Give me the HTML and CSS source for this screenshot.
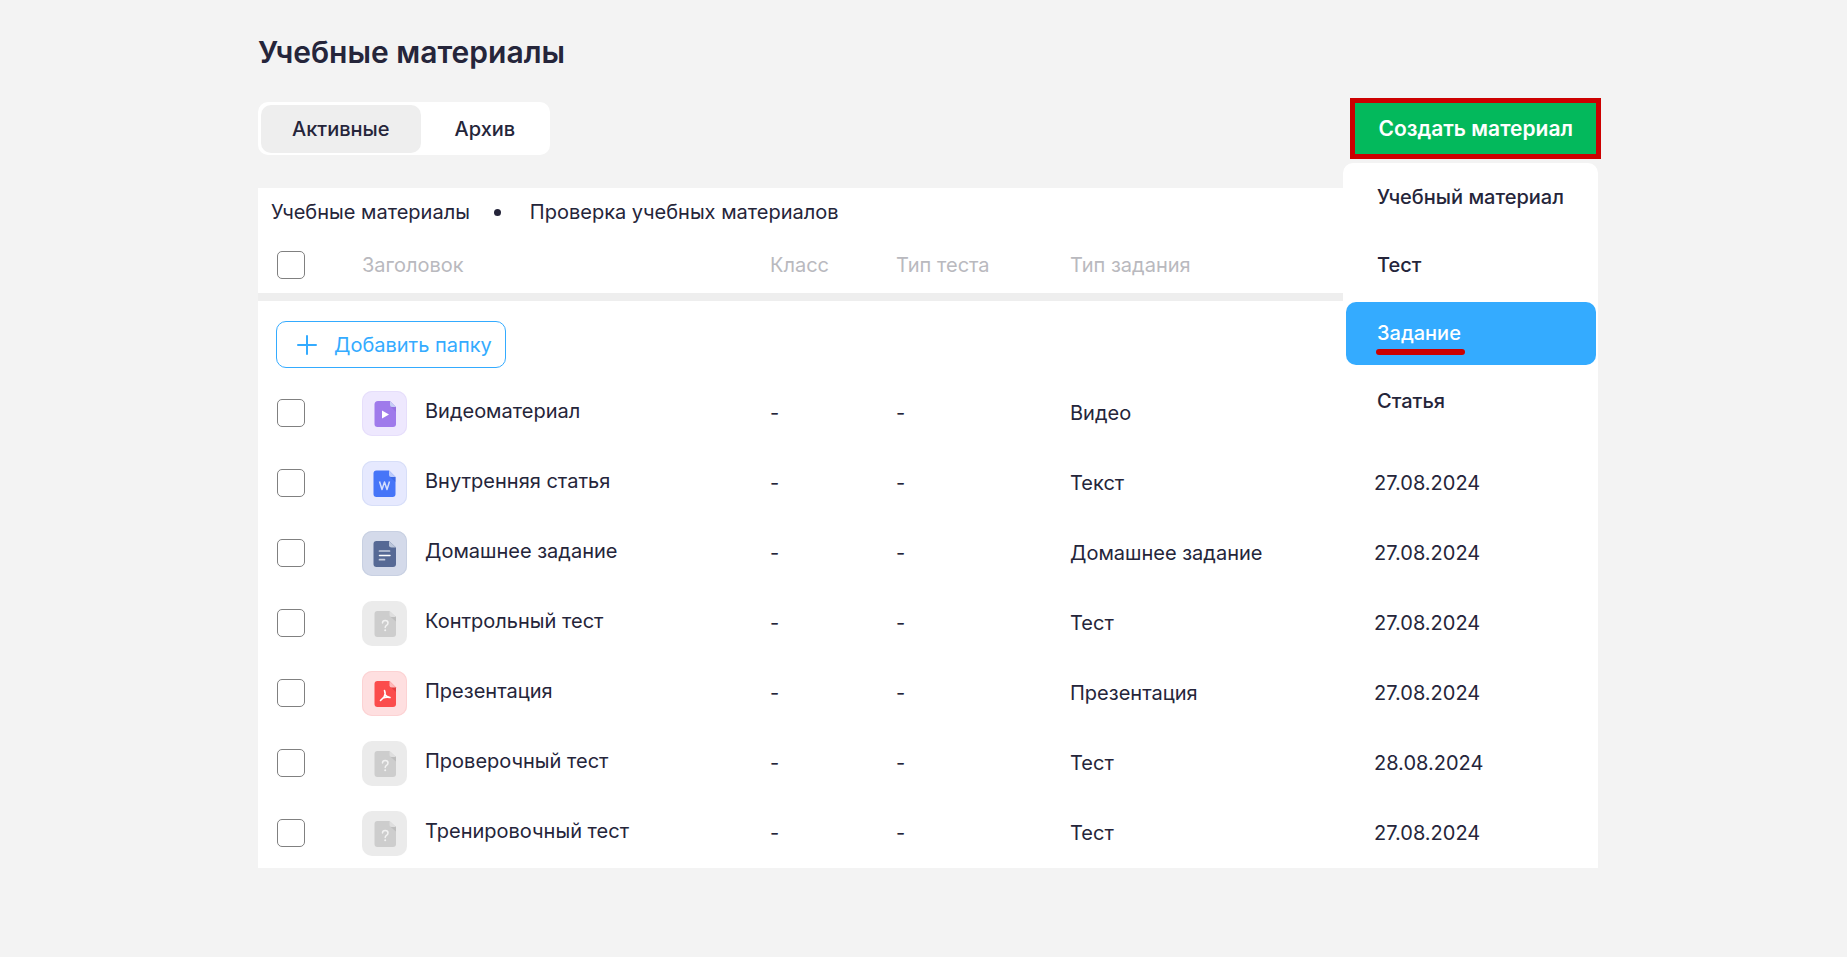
FILE: index.html
```html
<!DOCTYPE html>
<html lang="ru">
<head>
<meta charset="utf-8">
<meta name="viewport" content="width=device-width, initial-scale=1">
<title>Учебные материалы</title>
<link rel="stylesheet" href="styles.css">
</head>
<body>
<svg class="sprite" aria-hidden="true">
  <symbol id="i-video" viewBox="0 0 45 45">
    <path fill="#9f7aeb" d="M16 10H28L34 16V33Q34 36 31 36H15.500Q12.500 36 12.500 33V13.500Q12.500 10 16 10Z"/>
    <path fill="#8c69d8" opacity=".6" d="M29 16H34V21Z"/>
    <path fill="#c5cdf5" d="M28 10L34 16H30Q28 16 28 14Z"/>
    <path fill="#fff" d="M20 19.500L27 23.500L20 27.500Z"/>
  </symbol>
  <symbol id="i-word" viewBox="0 0 45 45">
    <path fill="#4675f8" d="M14.500 9.500H27L33.500 16V33Q33.500 36 30.500 36H14.500Q11.500 36 11.500 33V12.500Q11.500 9.500 14.500 9.500Z"/>
    <path fill="#355fd8" opacity=".6" d="M28 16H33.500V21Z"/>
    <path fill="#bccbfb" d="M27 9.500L33.500 16H29Q27 16 27 14Z"/>
    <path fill="none" stroke="#d3defd" stroke-width="1.500" stroke-linejoin="round" d="M17.500 20.500L20 28.500L22.500 21L25 28.500L27.500 20.500"/>
  </symbol>
  <symbol id="i-doc" viewBox="0 0 45 45">
    <path fill="#566995" d="M14.500 10H27L34 16.500V33Q34 36 31 36H14.500Q11.500 36 11.500 33V13Q11.500 10 14.500 10Z"/>
    <path fill="#bcc6da" d="M27 10L34 16.500H29.500Q27 16.500 27 14.500Z"/>
    <path fill="none" stroke="#c3cbdd" stroke-width="1.700" stroke-linecap="round" d="M17.500 20H27.500M17.500 28.700H22.500"/>
    <path fill="none" stroke="#fff" stroke-width="1.500" stroke-linecap="round" d="M17.500 24.400H28"/>
  </symbol>
  <symbol id="i-quiz" viewBox="0 0 45 45">
    <path fill="#cdcdcd" d="M15.500 10H27.500L34 16V33Q34 36 31 36H15.500Q12.500 36 12.500 33V13Q12.500 10 15.500 10Z"/>
    <path fill="#bdbdbd" d="M28 15.500H34V20.500Z"/>
    <path fill="#dedede" d="M27.500 10L34 16H29.500Q27.500 16 27.500 14Z"/>
    <path fill="none" stroke="#f2f2f2" stroke-width="1.500" stroke-linecap="round" d="M20.500 22Q20.500 19.500 23.200 19.500Q26 19.500 26 22Q26 23.500 24.500 24.300Q23.200 25 23.200 26.500"/>
    <circle cx="23.200" cy="29.300" r="1" fill="#f2f2f2"/>
  </symbol>
  <symbol id="i-pdf" viewBox="0 0 45 45">
    <path fill="#fb4c4c" d="M15.500 10H27.500L34 16.500V33Q34 36 31 36H15.500Q12.500 36 12.500 33V13Q12.500 10 15.500 10Z"/>
    <path fill="#e23d3f" d="M28.500 16H34V21Z"/>
    <path fill="#fdb9ba" d="M27.500 10L34 16.500H29.500Q27.500 16.500 27.500 14.500Z"/>
    <path fill="none" stroke="#fff" stroke-width="1.600" stroke-linecap="round" stroke-linejoin="round" d="M22.500 19.500Q24 23 22 26L18.500 29.500M22.800 23.500Q24.500 26 28 26.500M21 27Q24 25.800 28 26.500"/>
  </symbol>
</svg>

<main class="page">
  <h1 class="title">Учебные материалы</h1>

  <div class="toolbar">
    <div class="tabs">
      <button type="button" class="tab tab-active">Активные</button>
      <button type="button" class="tab">Архив</button>
    </div>
    <div class="create">
      <button type="button" class="create-btn">Создать материал</button>
      <div class="menu">
        <button type="button" class="menu-item">Учебный материал</button>
        <button type="button" class="menu-item">Тест</button>
        <button type="button" class="menu-item menu-item-active"><span class="marked">Задание</span></button>
        <button type="button" class="menu-item">Статья</button>
      </div>
    </div>
  </div>

  <section class="panel">
    <nav class="crumbs">
      <a class="crumb" href="#">Учебные материалы</a>
      <span class="dot"></span>
      <a class="crumb" href="#">Проверка учебных материалов</a>
    </nav>
    <table class="table">
      <colgroup>
        <col class="c-check"><col class="c-title"><col class="c-class"><col class="c-test"><col class="c-task"><col class="c-date">
      </colgroup>
      <thead>
        <tr>
          <th class="check-cell"><input class="check" type="checkbox" aria-labelledby="h-title"></th>
          <th id="h-title">Заголовок</th><th>Класс</th><th>Тип теста</th><th>Тип задания</th><th></th>
        </tr>
      </thead>
      <tbody>
        <tr>
          <td colspan="6" class="add-cell">
            <button type="button" class="add-btn"><svg class="plus" viewBox="0 0 20 20"><path d="M10 1V19M1 10H19"/></svg>Добавить папку</button>
          </td>
        </tr>
        <tr>
          <td class="check-cell"><input class="check" type="checkbox" aria-labelledby="m1"></td>
          <td><div class="material"><svg class="tile tile-video"><use href="#i-video"/></svg><span class="name" id="m1">Видеоматериал</span></div></td>
          <td>-</td><td>-</td><td>Видео</td><td></td>
        </tr>
        <tr>
          <td class="check-cell"><input class="check" type="checkbox" aria-labelledby="m2"></td>
          <td><div class="material"><svg class="tile tile-word"><use href="#i-word"/></svg><span class="name" id="m2">Внутренняя статья</span></div></td>
          <td>-</td><td>-</td><td>Текст</td><td>27.08.2024</td>
        </tr>
        <tr>
          <td class="check-cell"><input class="check" type="checkbox" aria-labelledby="m3"></td>
          <td><div class="material"><svg class="tile tile-doc"><use href="#i-doc"/></svg><span class="name" id="m3">Домашнее задание</span></div></td>
          <td>-</td><td>-</td><td>Домашнее задание</td><td>27.08.2024</td>
        </tr>
        <tr>
          <td class="check-cell"><input class="check" type="checkbox" aria-labelledby="m4"></td>
          <td><div class="material"><svg class="tile tile-quiz"><use href="#i-quiz"/></svg><span class="name" id="m4">Контрольный тест</span></div></td>
          <td>-</td><td>-</td><td>Тест</td><td>27.08.2024</td>
        </tr>
        <tr>
          <td class="check-cell"><input class="check" type="checkbox" aria-labelledby="m5"></td>
          <td><div class="material"><svg class="tile tile-pdf"><use href="#i-pdf"/></svg><span class="name" id="m5">Презентация</span></div></td>
          <td>-</td><td>-</td><td>Презентация</td><td>27.08.2024</td>
        </tr>
        <tr>
          <td class="check-cell"><input class="check" type="checkbox" aria-labelledby="m6"></td>
          <td><div class="material"><svg class="tile tile-quiz"><use href="#i-quiz"/></svg><span class="name" id="m6">Проверочный тест</span></div></td>
          <td>-</td><td>-</td><td>Тест</td><td>28.08.2024</td>
        </tr>
        <tr>
          <td class="check-cell"><input class="check" type="checkbox" aria-labelledby="m7"></td>
          <td><div class="material"><svg class="tile tile-quiz"><use href="#i-quiz"/></svg><span class="name" id="m7">Тренировочный тест</span></div></td>
          <td>-</td><td>-</td><td>Тест</td><td>27.08.2024</td>
        </tr>
      </tbody>
    </table>
  </section>
</main>
</body>
</html>
```

FILE: styles.css
```css
* {
  box-sizing: border-box;
}

body {
  margin: 0;
  background: #f3f3f3;
  color: #25253a;
  font-family: Inter, "Liberation Sans", sans-serif;
  font-size: 20px;
  line-height: 24px;
}

button {
  border: 0;
  margin: 0;
  background: none;
  color: inherit;
  font: inherit;
  font-weight: 500;
  cursor: pointer;
}

.sprite {
  display: none;
}

.page {
  padding: 32px 249px 64px 258px;
}

.title {
  margin: 0 0 30px;
  font-size: 30px;
  line-height: 40px;
  font-weight: 600;
}

.toolbar {
  display: flex;
  justify-content: space-between;
  align-items: center;
  margin-bottom: 33px;
}

.tabs {
  display: flex;
  gap: 1px;
  padding: 3px 2px 2px 3px;
  border-radius: 10px;
  background: #fff;
}

.tab {
  padding: 12px 33px;
  border-radius: 10px;
}

.tab-active {
  padding: 12px 31px;
  background: #eee;
}

.create {
  position: relative;
  padding-right: 2px;
}

.create-btn {
  display: block;
  padding: 14px 23px 13px;
  background: #03b95c;
  color: #fff;
  font-size: 21px;
  font-weight: 600;
  outline: 5px solid #c00;
}

.menu {
  position: absolute;
  z-index: 1;
  top: 60px;
  right: 0;
  display: flex;
  flex-direction: column;
  gap: 5px;
  width: 255px;
  padding: 3px 2px 3px 3px;
  border-radius: 10px;
  background: #fff;
}

.menu-item {
  height: 63px;
  padding: 0 31px 2px;
  border-radius: 10px;
  text-align: left;
  white-space: nowrap;
}

.menu-item-active {
  background: #34abff;
  color: #fff;
}

.marked {
  position: relative;
}

.marked::after {
  content: "";
  position: absolute;
  left: -1px;
  right: -4px;
  bottom: -10px;
  height: 6px;
  border-radius: 3px;
  background: #c00;
}

.panel {
  background: #fff;
}

.crumbs {
  display: flex;
  align-items: center;
  padding: 12px 13px;
}

.crumb {
  color: inherit;
  text-decoration: none;
}

.dot {
  width: 7px;
  height: 7px;
  margin: 0 29px 0 24px;
  border-radius: 50%;
  background: currentColor;
}

.table {
  width: 100%;
  table-layout: fixed;
  border-collapse: separate;
  border-spacing: 0;
}

.c-check { width: 104px; }
.c-title { width: 408px; }
.c-class { width: 126px; }
.c-test { width: 174px; }
.c-task { width: 304px; }

.table th,
.table td {
  height: 70px;
  padding: 0;
  text-align: left;
}

.table th {
  height: 65px;
  border-bottom: 8px solid #eee;
  color: #b9b9be;
  font-weight: 400;
}

.table .check-cell {
  padding-left: 19px;
}

.check {
  appearance: none;
  display: block;
  width: 28px;
  height: 28px;
  margin: 0;
  border: 1px solid #808080;
  border-radius: 5px;
  background: #fff;
}

.table .add-cell {
  height: 77px;
  padding: 20px 18px 10px;
  vertical-align: top;
}

.add-btn {
  display: flex;
  align-items: center;
  gap: 17px;
  height: 47px;
  padding: 0 13px 0 20px;
  border: 1px solid #34abff;
  border-radius: 10px;
  color: #34abff;
  font-weight: 400;
}

.plus {
  width: 20px;
  height: 20px;
  fill: none;
  stroke: currentColor;
  stroke-width: 2;
  stroke-linecap: round;
}

.material {
  display: flex;
  align-items: center;
  gap: 18px;
}

.name {
  padding-bottom: 4px;
}

.tile {
  width: 45px;
  height: 45px;
  border-radius: 10px;
}

.tile-video { background: #eee8fe; box-shadow: inset 0 0 0 1px #e6defb; }
.tile-word { background: #e6e9fe; box-shadow: inset 0 0 0 1px #d7def8; }
.tile-doc { background: #d4daea; box-shadow: inset 0 0 0 1px #c8d0e2; }
.tile-quiz { background: #ebebeb; }
.tile-pdf { background: #fedfe0; box-shadow: inset 0 0 0 1px #fcd2d3; }
```
